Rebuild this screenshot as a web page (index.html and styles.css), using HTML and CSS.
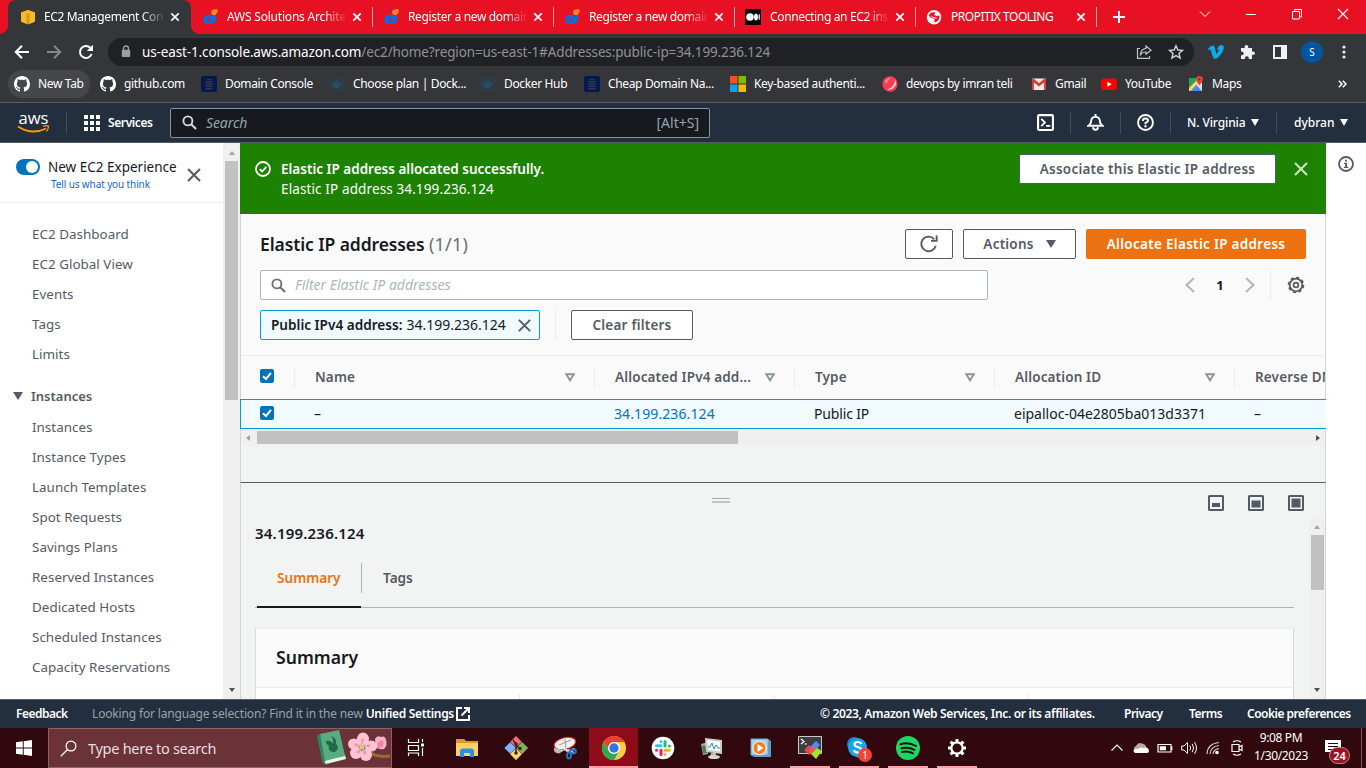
FILE: index.html
```html
<!DOCTYPE html>
<html lang="en">
<head>
<meta charset="utf-8">
<title>EC2 Management Console</title>
<link rel="stylesheet" href="styles.css">
</head>
<body>
<svg class="defs" width="0" height="0">
  <symbol id="x" viewBox="0 0 16 16"><path d="M2 2L14 14M14 2L2 14" fill="none" stroke="currentColor" stroke-width="2"/></symbol>
  <symbol id="tabx" viewBox="0 0 10 10"><path d="M1.3 1.3L8.7 8.7M8.7 1.3L1.3 8.7" fill="none" stroke="currentColor" stroke-width="1.700"/></symbol>
  <symbol id="do" viewBox="0 0 16 16"><path d="M7 5.500Q10 5.500 11.500 7.500L14 5V11A5.500 4.500 0 0 1 8 15H5.500A4.700 4.700 0 0 1 1 10.500Q1.500 5.800 7 5.500Z" fill="#0f6bdc"/><circle cx="7" cy="10.700" r="1.500" fill="#e81123"/><circle cx="12" cy="3.200" r="2.800" fill="#ff8a1e"/><circle cx="14" cy="2" r="1.900" fill="#ff8a1e"/></symbol>
  <symbol id="gh" viewBox="0 0 16 16"><path fill="#fff" d="M8 0C3.580 0 0 3.580 0 8c0 3.540 2.290 6.530 5.470 7.590.4.070.55-.17.55-.38 0-.19-.01-.82-.01-1.490-2.010.37-2.530-.49-2.690-.94-.09-.23-.48-.94-.82-1.130-.28-.15-.68-.52-.01-.53.63-.01 1.080.58 1.230.82.72 1.210 1.870.87 2.330.66.070-.52.28-.87.51-1.070-1.780-.2-3.640-.89-3.640-3.950 0-.87.31-1.590.82-2.150-.08-.2-.36-1.020.08-2.120 0 0 .67-.21 2.200.82.64-.18 1.320-.27 2-.27s1.360.09 2 .27c1.530-1.040 2.200-.82 2.200-.82.44 1.100.16 1.920.08 2.120.51.56.82 1.270.82 2.150 0 3.070-1.870 3.750-3.650 3.950.29.25.54.73.54 1.480 0 1.070-.01 1.930-.01 2.200 0 .21.15.46.55.38A8.010 8.010 0 0 0 16 8c0-4.420-3.580-8-8-8z"/></symbol>
  <symbol id="db" viewBox="0 0 16 16"><rect width="16" height="16" rx="2" fill="#03194f"/><path d="M5.500 3H10.500V4H5.500ZM4.500 5H11.500V6.600H4.500ZM4.500 7.300H11.500V8.800H4.500ZM4.500 9.500H11.500V11H4.500ZM4.500 11.700H11.500V13.500H4.500Z" fill="#35384a"/></symbol>
  <symbol id="dock" viewBox="0 0 16 16"><circle cx="8" cy="8" r="7.400" fill="#2f3a42" stroke="#2a4656" stroke-width=".8"/><path d="M3 8H10.500Q11 6.500 10.500 5.500Q12 6 12 7.300Q13 7 13.500 7.500Q13 8.700 11.700 8.700Q10.500 12 6.500 12Q3 12 3 8ZM4.500 6H9.500V7.500H4.500ZM7.500 4.300H9V6H7.500Z" fill="#24516a"/></symbol>
  <symbol id="search" viewBox="0 0 16 16"><circle cx="6.300" cy="6.300" r="4.800" fill="none" stroke="currentColor" stroke-width="2"/><path d="M9.800 9.800L15 15" stroke="currentColor" stroke-width="2.200"/></symbol>
  <symbol id="check" viewBox="0 0 14 14"><rect width="14" height="14" rx="2" fill="#0073bb"/><path d="M3 7.200L6 10L11 3.800" fill="none" stroke="#fff" stroke-width="2"/></symbol>
  <symbol id="sort" viewBox="0 0 10 9"><path d="M1.200 1.200H8.800L5 7.300Z" fill="none" stroke="#879596" stroke-width="1.900"/></symbol>
</svg>

<header class="tabs">
  <div class="tab active">
    <svg class="i16" viewBox="0 0 16 16"><path d="M1 3.500L8 1L15 3.500V12.500L8 15.500L1 12.500Z" fill="#d9971b"/><path d="M1 3.500L6.500 4.500V15L1 12.500ZM15 3.500L9.500 4.500V15L15 12.500ZM1 3.500L8 1L15 3.500L8 4.600Z" fill="#f6b92c"/></svg>
    <span class="t fade">EC2 Management Con</span><svg class="tx"><use href="#tabx"/></svg></div>
  <div class="tab"><svg class="i16"><use href="#do"/></svg><span class="t fade s2">AWS Solutions Archite</span><svg class="tx"><use href="#tabx"/></svg></div>
  <div class="tab"><svg class="i16"><use href="#do"/></svg><span class="t fade">Register a new domain</span><svg class="tx"><use href="#tabx"/></svg></div>
  <div class="tab"><svg class="i16"><use href="#do"/></svg><span class="t fade">Register a new domain</span><svg class="tx"><use href="#tabx"/></svg></div>
  <div class="tab"><svg class="i16" viewBox="0 0 16 16"><rect width="16" height="16" rx="1" fill="#000"/><circle cx="5" cy="8" r="3.800" fill="#fff"/><ellipse cx="11" cy="8" rx="1.900" ry="3.600" fill="#fff"/><ellipse cx="14.200" cy="8" rx=".7" ry="3.200" fill="#fff"/></svg><span class="t fade">Connecting an EC2 ins</span><svg class="tx"><use href="#tabx"/></svg></div>
  <div class="tab"><svg class="i16" viewBox="0 0 16 16"><circle cx="8" cy="8.300" r="7.200" fill="#f6f6f6"/><path d="M4 4.500Q7 2.500 9.500 3.800L8 6L11 7L13.500 6.500Q14 9 12 11.500L9.500 13.500L8 12L9 10L4.500 8.500L2.800 6.500Z" fill="#e81123"/><path d="M4.500 6L7 8L11.500 8.700L10 9.600L6 8.500Z" fill="#f6f6f6"/></svg><span class="t s3">PROPITIX TOOLING</span><svg class="tx"><use href="#tabx"/></svg></div>
  <svg class="plus" viewBox="0 0 12 12"><path d="M6 0V12M0 6H12" stroke="#fff" stroke-width="2"/></svg>
  <div class="winctl">
    <svg viewBox="0 0 12 12"><path d="M1 3.500L6 8.500L11 3.500" fill="none" stroke="#fff" stroke-width="1"/></svg>
    <svg viewBox="0 0 12 12"><path d="M1 6.500H11" stroke="#fff"/></svg>
    <svg viewBox="0 0 12 12"><path d="M1.500 3.500H8.500V11H1.500ZM3.500 3.500V1.500H10.500V9H8.500" fill="none" stroke="#fff"/></svg>
    <svg viewBox="0 0 12 12"><path d="M1 1L11 11M11 1L1 11" stroke="#fff" stroke-width="1.100"/></svg>
  </div>
</header>

<div class="toolbar">
  <svg class="nav n1" viewBox="0 0 16 16"><path d="M15 8H2M8 1.800L1.800 8L8 14.200" fill="none" stroke="#fff" stroke-width="2"/></svg>
  <svg class="nav n2" viewBox="0 0 16 16"><path d="M1 8H14M8 1.800L14.200 8L8 14.200" fill="none" stroke="#85868a" stroke-width="2"/></svg>
  <svg class="nav n3" viewBox="0 0 16 16"><path d="M13.600 10A6 6 0 1 1 12.300 3.800" fill="none" stroke="#fff" stroke-width="2"/><path d="M15 .8V7H8.800Z" fill="#fff"/></svg>
  <div class="url">
    <svg class="lock" viewBox="0 0 10 13"><path d="M2.500 5V3.500A2.500 2.500 0 0 1 7.500 3.500V5" fill="none" stroke="#9aa0a6" stroke-width="1.400"/><rect x=".8" y="4.800" width="8.400" height="7.200" rx="1" fill="#9aa0a6"/></svg>
    <span class="urltext"><b>us-east-1.console.aws.amazon.com</b>/ec2/home?region=us-east-1#Addresses:public-ip=34.199.236.124</span>
    <svg class="share" viewBox="0 0 16 16"><path d="M4 4.500H1.500V14.300H13.500V12" fill="none" stroke="#c2c3c5" stroke-width="1.200"/><path d="M10 2L15 6.200L10 10.300V8Q6.500 7.800 4.500 10.600Q5 5 10 4.400Z" fill="none" stroke="#c2c3c5" stroke-width="1.200"/></svg>
    <svg class="i16" viewBox="0 0 16 16"><path d="M8 1.800L9.900 6L14.500 6.400L11 9.500L12.100 14L8 11.600L3.900 14L5 9.500L1.500 6.400L6.100 6Z" fill="none" stroke="#d4d5d7" stroke-width="1.400"/></svg>
  </div>
  <div class="ext">
    <svg class="i16" viewBox="0 0 16 16"><path d="M0 4.800Q3.500 1.300 5.200 1.500Q7 1.800 7.400 6Q8 9.700 8.600 9.700Q9.300 9.700 10.700 6.800Q11 5.200 9 5.600Q10.300 1 13.500 1Q16 1.200 15.700 4.500Q15 8 11 12.500Q8.500 15.200 6.500 14.700Q4.800 14 4 10Q3 6 2.400 5.500Q2 5.400.8 6.200Z" fill="#0aabea"/></svg>
    <svg class="i16" viewBox="0 0 16 16"><path d="M1 4H4.700Q4.200 1 6.400 1Q8.600 1 8.200 4H12V7.500Q15 7 15 9.200Q15 11.300 12 10.900V15H8.800Q9 12.300 6.900 12.300Q4.800 12.300 5 15H1V11.200Q3.800 11.200 3.800 9.200Q3.800 7.300 1 7.400Z" fill="#f1f1f1"/></svg>
    <svg class="i16" viewBox="0 0 16 16"><path d="M1 1H15V15H1ZM3 3V13H9V3Z" fill="#f1f1f1" fill-rule="evenodd"/></svg>
    <span class="avatar">S</span>
    <svg class="dots" viewBox="0 0 4 14"><circle cx="2" cy="2" r="1.600" fill="#eee"/><circle cx="2" cy="7" r="1.600" fill="#eee"/><circle cx="2" cy="12" r="1.600" fill="#eee"/></svg>
  </div>
</div>

<nav class="marks">
  <a class="mk on"><svg class="i16"><use href="#gh"/></svg>New Tab</a>
  <a class="mk"><svg class="i16"><use href="#gh"/></svg>github.com</a>
  <a class="mk"><svg class="i16"><use href="#db"/></svg>Domain Console</a>
  <a class="mk"><svg class="i16"><use href="#dock"/></svg>Choose plan | Dock...</a>
  <a class="mk"><svg class="i16"><use href="#dock"/></svg>Docker Hub</a>
  <a class="mk"><svg class="i16"><use href="#db"/></svg>Cheap Domain Na...</a>
  <a class="mk"><svg class="i16" viewBox="0 0 16 16"><path d="M0 0H7.500V7.500H0Z" fill="#f4511e"/><path d="M8.500 0H16V7.500H8.500Z" fill="#7fba00"/><path d="M0 8.500H7.500V16H0Z" fill="#02a4ef"/><path d="M8.500 8.500H16V16H8.500Z" fill="#ffb901"/></svg>Key-based authenti...</a>
  <a class="mk"><svg class="i16" viewBox="0 0 16 16"><circle cx="8" cy="8" r="7.700" fill="#fb3b53"/><path d="M3 5Q5 1.500 9.500 1.500Q5.500 3.500 4.500 8Q3 7 3 5Z" fill="#fb8c9a"/><path d="M13.300 3.500Q16 9.500 10 13Q7.500 14 5.500 13.500Q12 11.500 13.300 3.500Z" fill="#fbd0d5"/></svg>devops by imran teli</a>
  <a class="mk"><svg class="i16" viewBox="0 0 16 16"><rect x="1" y="2.500" width="14" height="11.500" rx="1" fill="#eee"/><path d="M1 14V3.500L2.500 2.500L8 7L13.500 2.500L15 3.500V14H13V6.500L8 10.500L3 6.500V14Z" fill="#d93f35"/></svg>Gmail</a>
  <a class="mk"><svg class="i16" viewBox="0 0 16 16"><rect y="2.500" width="16" height="11.500" rx="3" fill="#f00"/><path d="M6.300 5.700L10.700 8.200L6.300 10.800Z" fill="#fff"/></svg>YouTube</a>
  <a class="mk"><svg class="i16" viewBox="0 0 16 16"><path d="M1 2H14V15H1Z" fill="#eef"/><path d="M1 2H9L8 7L1 14Z" fill="#2da05a"/><path d="M1 15L8 8L14 15Z" fill="#4c8bf5"/><path d="M1 12L9.500 3.500L11.500 5.500L2.500 15H1Z" fill="#fddc58"/><path d="M8 8L14 15V10L11 7Z" fill="#dde"/><path d="M11.500 0A3.300 3.300 0 0 1 14.800 3.300Q14.800 5.500 11.500 9.500Q8.200 5.500 8.200 3.300A3.300 3.300 0 0 1 11.500 0Z" fill="#e84335"/><circle cx="11.500" cy="3.300" r="1.100" fill="#7b231c"/></svg>Maps</a>
  <svg class="more" viewBox="0 0 9 8"><path d="M.8.8L4 4L.8 7.200M4.800.8L8 4L4.800 7.200" fill="none" stroke="#fff" stroke-width="1.500"/></svg>
</nav>

<div class="awsnav">
  <svg class="awslogo" viewBox="0 0 32 24"><text x="0.500" y="11.500" textLength="30" lengthAdjust="spacingAndGlyphs" class="awstext">aws</text><path d="M0 14.500Q14 23.500 28 16.500" fill="none" stroke="#f90" stroke-width="1.900"/><path d="M25 14.200Q30 13 30.500 14.500Q30.500 16.500 28.500 19.500" fill="none" stroke="#f90" stroke-width="1.300"/></svg>
  <i class="vd v1"></i>
  <svg class="grid" viewBox="0 0 16 16"><path d="M0 0H4V4H0ZM6 0H10V4H6ZM12 0H16V4H12ZM0 6H4V10H0ZM6 6H10V10H6ZM12 6H16V10H12ZM0 12H4V16H0ZM6 12H10V16H6ZM12 12H16V16H12Z" fill="#fff"/></svg>
  <b class="services">Services</b>
  <div class="awssearch"><svg class="si"><use href="#search"/></svg><i>Search</i><span>[Alt+S]</span></div>
  <div class="awsright">
    <div class="cell c1"><svg class="i17" viewBox="0 0 16 16"><rect x="1" y="1" width="14" height="14" rx="1" fill="none" stroke="#fff" stroke-width="2"/><path d="M4 4.500L7.500 8L4 11.500M8.500 11.200H12.500" fill="none" stroke="#fff" stroke-width="1.700"/></svg></div>
    <div class="cell c2"><svg class="i17" viewBox="0 0 16 16"><path d="M8 0V2.500M1.500 11Q3.800 9.500 4 6Q4.500 2.700 8 2.700Q11.500 2.700 12 6Q12.200 9.500 14.500 11ZM5.500 12.500Q6 14.800 8 14.800Q10 14.800 10.500 12.500" fill="none" stroke="#fff" stroke-width="1.800"/></svg></div>
    <div class="cell c2"><svg class="i17" viewBox="0 0 16 16"><circle cx="8" cy="8" r="7" fill="none" stroke="#fff" stroke-width="1.800"/><path d="M5.500 6.600Q5.500 4.300 8 4.300Q10.400 4.300 10.400 6.300Q10.400 7.500 8 8.300V9.600" fill="none" stroke="#fff" stroke-width="1.800"/><rect x="7" y="10.500" width="2" height="2" fill="#fff"/></svg></div>
    <div class="cell c3">N. Virginia<i class="dn"></i></div>
    <div class="cell c4">dybran<i class="dn"></i></div>
  </div>
</div>

<main class="page">
  <aside class="side">
    <div class="sidehead">
      <i class="toggle"></i>
      <div class="exp"><span>New EC2 Experience</span><small>Tell us what you think</small></div>
      <svg class="sx"><use href="#x"/></svg>
    </div>
    <ul class="links">
      <li>EC2 Dashboard</li><li>EC2 Global View</li><li>Events</li><li>Tags</li><li>Limits</li>
    </ul>
    <h3 class="group"><i class="dn"></i>Instances</h3>
    <ul class="links l2">
      <li>Instances</li><li>Instance Types</li><li>Launch Templates</li><li>Spot Requests</li><li>Savings Plans</li><li>Reserved Instances</li><li>Dedicated Hosts</li><li>Scheduled Instances</li><li>Capacity Reservations</li>
    </ul>
  </aside>
  <div class="vscroll"><i class="up"></i><i class="thumb"></i><i class="down"></i></div>

  <section class="content">
    <div class="flash">
      <svg class="i16" viewBox="0 0 16 16"><circle cx="8" cy="8" r="7" fill="none" stroke="#fff" stroke-width="1.800"/><path d="M4.700 8.200L7.200 10.500L11.300 5.800" fill="none" stroke="#fff" stroke-width="1.800"/></svg>
      <div class="flashtext"><b>Elastic IP address allocated successfully.</b><span>Elastic IP address 34.199.236.124</span></div>
      <button class="btn assoc">Associate this Elastic IP address</button>
      <svg class="fx"><use href="#x"/></svg>
    </div>
    <div class="head edge">
      <div class="row1">
        <h1>Elastic IP addresses <span>(1/1)</span></h1>
        <button class="btn refresh"><svg class="i18" viewBox="0 0 16 16"><path d="M14 9.500A6.500 6.500 0 1 1 12.700 3.800M14.800 .5V5.200H9.800" fill="none" stroke="#545b64" stroke-width="1.700"/></svg></button>
        <button class="btn actions">Actions<i class="dn"></i></button>
        <button class="btn primary">Allocate Elastic IP address</button>
      </div>
      <div class="row2">
        <div class="filter"><svg class="si"><use href="#search"/></svg><i>Filter Elastic IP addresses</i></div>
        <div class="pager">
          <svg class="pg" viewBox="0 0 10 16"><path d="M9 1L1.500 8L9 15" fill="none" stroke="#aab7b8" stroke-width="1.900"/></svg><b>1</b><svg class="pg" viewBox="0 0 10 16"><path d="M1 1L8.500 8L1 15" fill="none" stroke="#aab7b8" stroke-width="1.900"/></svg>
          <i class="pd"></i>
          <svg class="gear" viewBox="0 0 18 18"><circle cx="9" cy="9" r="6.300" fill="none" stroke="#545b64" stroke-width="1.800"/><circle cx="9" cy="9" r="7.500" fill="none" stroke="#545b64" stroke-width="1.600" stroke-dasharray="3.200 2.690"/><circle cx="9" cy="9" r="2.400" fill="none" stroke="#545b64" stroke-width="1.700"/></svg>
        </div>
      </div>
      <div class="row3">
        <div class="token"><b>Public IPv4 address:</b><span>34.199.236.124</span><svg><use href="#x"/></svg></div>
        <i class="pd"></i>
        <button class="btn clear">Clear filters</button>
      </div>
    </div>
    <div class="tr th edge">
      <div class="ck"><svg><use href="#check"/></svg></div>
      <div class="td w300"><span>Name</span><svg><use href="#sort"/></svg></div>
      <div class="td w200"><span>Allocated IPv4 add...</span><svg><use href="#sort"/></svg></div>
      <div class="td w200"><span>Type</span><svg><use href="#sort"/></svg></div>
      <div class="td w240"><span>Allocation ID</span><svg><use href="#sort"/></svg></div>
      <div class="td"><span>Reverse DNS</span></div>
    </div>
    <div class="tr row">
      <div class="ck"><svg><use href="#check"/></svg></div>
      <div class="td w300">–</div>
      <div class="td w200 link">34.199.236.124</div>
      <div class="td w200 pub">Public IP</div>
      <div class="td w240">eipalloc-04e2805ba013d3371</div>
      <div class="td">–</div>
    </div>
    <div class="hscroll edge"><i class="left"></i><i class="hthumb"></i><i class="right"></i></div>
    <div class="gap edge"></div>
    <div class="split edge">
      <div class="splitbar"><i class="handle"></i>
        <div class="modes">
          <svg viewBox="0 0 16 16"><rect x="1" y="1" width="14" height="14" rx=".5" fill="none" stroke="#545b64" stroke-width="2"/><path d="M4 8H12V12H4Z" fill="#545b64"/></svg>
          <svg viewBox="0 0 16 16"><rect x="1" y="1" width="14" height="14" rx=".5" fill="none" stroke="#545b64" stroke-width="2"/><path d="M3.500 5.500H12.500V12.500H3.500Z" fill="#545b64"/></svg>
          <svg viewBox="0 0 16 16"><rect x="1" y="1" width="14" height="14" rx=".5" fill="none" stroke="#545b64" stroke-width="2"/><path d="M3.500 3.500H12.500V12.500H3.500Z" fill="#545b64"/></svg>
        </div>
      </div>
      <div class="splitbody">
        <div class="detail">
          <h2>34.199.236.124</h2>
          <div class="dtabs"><b class="cur">Summary</b><b>Tags</b></div>
          <div class="card"><h2>Summary</h2><div class="cols"><i></i><i></i><i></i></div></div>
        </div>
        <div class="vscroll inner"><i class="up"></i><i class="thumb"></i><i class="down"></i></div>
      </div>
    </div>
  </section>
  <aside class="info"><svg class="i16" viewBox="0 0 16 16"><circle cx="8" cy="8" r="7" fill="none" stroke="#545b64" stroke-width="1.800"/><path d="M7 3.700H9V5.500H7ZM6 6.700H9V10.700H10.300V12H5.800V10.700H7.200V8H6Z" fill="#545b64"/></svg></aside>
</main>

<footer class="foot">
  <b class="f1">Feedback</b>
  <span class="f2">Looking for language selection? Find it in the new <b>Unified Settings</b></span>
  <svg class="extl" viewBox="0 0 14 14"><path d="M6 1H1V13H13V8M8 1H13V6M13 1L5.500 8.500" fill="none" stroke="#fff" stroke-width="2"/></svg>
  <b class="f3">© 2023, Amazon Web Services, Inc. or its affiliates.</b>
  <b class="f4">Privacy</b><b class="f5">Terms</b><b class="f6">Cookie preferences</b>
</footer>

<div class="taskbar">
  <div class="start"><svg class="i16" viewBox="0 0 16 16"><path d="M0 2.300L6.800 1.300V7.600H0ZM7.700 1.200L16 0V7.600H7.700ZM0 8.400H6.800V14.700L0 13.700ZM7.700 8.400H16V16L7.700 14.800Z" fill="#fff"/></svg></div>
  <div class="tsearch">
    <svg class="mag" viewBox="0 0 17 17"><circle cx="11" cy="6" r="4.900" fill="none" stroke="#fff" stroke-width="1.200"/><path d="M7.500 9.500L.8 16.200" stroke="#fff" stroke-width="1.300"/></svg>
    <span>Type here to search</span>
    <svg class="art" viewBox="0 0 76 36">
      <path d="M2 6L24 1L31 29L9 35Z" fill="#277d5c"/><path d="M9 31L30 25L31 29L11 34Z" fill="#eef3ee"/><path d="M5 4L24 0L30 26L9 31Z" fill="#58ad80"/><path d="M2 6L5 4L10 31L8 35Z" fill="#2c8562"/><path d="M14 16Q10 13 11 11Q16 10 18 14Q19 9 16 6Q22 8 21 14A4.500 4.500 0 1 1 14 16Z" fill="#20694d"/>
      <path d="M54 21Q60 28 75 26" stroke="#9a6b31" stroke-width="3" fill="none"/>
      <path d="M60 9Q62 5 66 7Q70 5 71 10Q73 15 69 19Q63 20 61 16Z" fill="#ffb0c6"/><path d="M62 14Q65 8 69 12Q68 18 63 18Z" fill="#f284a6"/>
      <g fill="#ffc3d3"><ellipse cx="48" cy="9" rx="6" ry="6.500"/><ellipse cx="56" cy="16" rx="6.500" ry="5.500"/><ellipse cx="51" cy="25" rx="6" ry="6"/><ellipse cx="41" cy="23" rx="6" ry="6"/><ellipse cx="39" cy="14" rx="6" ry="5.500"/></g>
      <g fill="#f694b3"><path d="M47 17L46 9L49 9ZM47 17L55 14L55 17ZM47 17L52 23L49 25ZM47 17L44 24L41 22ZM47 17L39 16L40 13Z"/></g><circle cx="47" cy="17" r="2.600" fill="#c3d47c"/>
    </svg>
  </div>
  <div class="app first"><svg class="i24" viewBox="0 0 24 24"><path d="M4.500 3V6.500H14.500V3M4.500 20V17H14.500V20M4.500 9.500H14.500V14.500H4.500ZM18.500 3V6M18.500 12V20" fill="none" stroke="#fff" stroke-width="1.200"/><rect x="17" y="7.500" width="3" height="3" fill="#fff"/></svg></div>
  <div class="app"><svg class="i24" viewBox="0 0 24 24"><path d="M1 3H9L11 5H23V8H1Z" fill="#dc9a20"/><path d="M1 7H23V20H1Z" fill="#fdd162"/><path d="M5 21V15Q5 12.500 8 12.500H16Q19 12.500 19 15V21H15V17H9V21Z" fill="#2f8edd"/></svg></div>
  <div class="app"><svg class="i24" viewBox="0 0 24 24"><g transform="rotate(45 12 12)"><rect x="3.500" y="3.500" width="8" height="8" fill="#f27178"/><rect x="12.500" y="3.500" width="8" height="8" fill="#f27178"/><rect x="12.500" y="12.500" width="8" height="8" fill="#7bb658"/></g><path d="M6.300 6.300L12 12L6.300 17.700L.3 12Z" fill="#80b3ff"/><path d="M12 12.500L17.700 18L12 24L6.300 18Z" fill="#ffd76c"/><path d="M17.700 6.300L23.700 12L17.700 17.700L12 12Z" fill="#7bb658"/><path d="M9 4L12 8V18M12 9L16 13" stroke="#43211f" stroke-width="1.500" fill="none"/><g fill="#43211f"><circle cx="12" cy="8" r="1.800"/><circle cx="12" cy="17" r="1.800"/><circle cx="16" cy="12.500" r="1.800"/></g></svg></div>
  <div class="app"><svg class="i24" viewBox="0 0 24 24"><ellipse cx="12" cy="7.500" rx="11" ry="5.800" fill="#f2eeee" stroke="#d92b2b" transform="rotate(-14 12 8)"/><path d="M1 12Q0 17 6 17.500L12 14Z" fill="#b9bdc0"/><path d="M6 9L18 4M12 3L13 13" stroke="#999"/><path d="M11 13L21 17M13 15L22 13" stroke="#ddd" stroke-width="2"/><g fill="none" stroke="#2474b8" stroke-width="2"><ellipse cx="20" cy="15.500" rx="3" ry="2"/><ellipse cx="16" cy="19.500" rx="2" ry="3"/></g></svg></div>
  <div class="app chrome"><svg class="i24" viewBox="0 0 24 24"><circle cx="12" cy="12" r="12" fill="#fc4"/><path d="M1.600 6A12 12 0 0 1 22.400 6H12Q7 6 6.500 14Z" fill="#e94235"/><path d="M1.600 6A12 12 0 0 0 12 24L17.200 15Q11 20 6.800 15Z" fill="#2da94f"/><circle cx="12" cy="12" r="6" fill="#fff"/><circle cx="12" cy="12" r="4.700" fill="#3574e3"/></svg></div>
  <div class="app"><svg class="i24" viewBox="0 0 24 24"><circle cx="12" cy="12" r="11.300" fill="#fff"/><g stroke-width="3" stroke-linecap="round"><path d="M10 5.500V5.600M5.500 9.800H10" stroke="#36c5f0"/><path d="M14 5.500V10M18.500 10V10.100" stroke="#2eb67d"/><path d="M14 14.200H18.500M14 18.500V18.600" stroke="#ecb22e"/><path d="M10 14.200V18.500M5.500 14.200V14.300" stroke="#e01e5a"/></g></svg></div>
  <div class="app"><svg class="i24" viewBox="0 0 24 24"><path d="M1 8L8 6V18L3 19Z" fill="#9da3a0"/><path d="M2 10H7V17H3Z" fill="#507858"/><path d="M5 2L22 4V18L6 16Z" fill="#c9ccca"/><path d="M7 4L20 5.500V15.500L8 14Z" fill="#f5fafb"/><path d="M8 11H10L12 7L14 13L16 9L18 12H20" fill="none" stroke="#3e8aae" stroke-width="1"/><path d="M11 17H16V21H10Z" fill="#b5b9b6"/><ellipse cx="14" cy="21" rx="6" ry="2" fill="#d4d8d5"/></svg></div>
  <div class="app"><svg class="i24" viewBox="0 0 24 24"><path d="M2 3H19L22 5V21H5L2 19Z" fill="#5f9cc0"/><path d="M2 3H19V19H2Z" fill="#a9d4ea" stroke="#6da6c4"/><circle cx="10.500" cy="12" r="6.600" fill="#f47b20" stroke="#fff"/><path d="M8.500 8L14.500 12L8.500 16Z" fill="#fff"/></svg></div>
  <div class="app run"><svg class="i24" viewBox="0 0 24 24"><path d="M.5.500H23.500V17.500H.5Z" fill="#3a3e3f" stroke="#c9c9c9"/><path d="M3 3L6 5.500L3 8M6.500 8H9" stroke="#fff" stroke-width="1.200" fill="none"/><path d="M6 14L11 9L16 14L11 19Z" fill="#e84747"/><path d="M12 11L18 5L22 9L16 16Z" fill="#4e8df5"/><path d="M13 18L19 12L24 15L18 23Z" fill="#a6e22e"/><path d="M11 15L16 10L18 13L13 18Z" fill="#f5574e"/></svg></div>
  <div class="app run"><svg class="i24" viewBox="0 0 24 24"><circle cx="7" cy="8" r="7" fill="#0b8ad0"/><circle cx="13" cy="15" r="7" fill="#0b8ad0"/><circle cx="10.500" cy="11.500" r="9.500" fill="#18a8ea"/><path d="M14.500 8Q13.500 5.800 10.500 6Q7.500 6.300 7.500 8.300Q7.600 10.500 11 11.200Q14.700 12 14.300 14.400Q13.800 16.700 10.800 16.700Q7.700 16.600 6.900 14.200" fill="none" stroke="#fff" stroke-width="2.200"/></svg><span class="badge1">1</span></div>
  <div class="app run"><svg class="i24" viewBox="0 0 24 24"><circle cx="12" cy="12" r="12" fill="#1ed760"/><path d="M4.500 8.200Q12.500 5.800 20 10M5.500 12.300Q12 10.500 18.500 13.800M6 16Q12 14.500 17 17.300" fill="none" stroke="#191414" stroke-width="2" stroke-linecap="round"/></svg></div>
  <div class="app run"><svg class="i24" viewBox="0 0 24 24"><circle cx="12" cy="12" r="5.700" fill="none" stroke="#fff" stroke-width="2.300"/><path d="M12 3V6.200M12 17.800V21M3 12H6.200M17.800 12H21M5.600 5.600L7.900 7.900M16.100 16.100L18.400 18.400M5.600 18.400L7.900 16.100M16.100 7.900L18.400 5.600" stroke="#fff" stroke-width="3"/></svg></div>
  <div class="tray">
    <svg viewBox="0 0 16 16"><path d="M2.500 10.500L8 5L13.500 10.500" fill="none" stroke="#fff" stroke-width="1.200"/></svg>
    <svg viewBox="0 0 16 16"><path d="M3 12.500A3.500 3.500 0 0 1 3 6Q5 2 9 3.500Q13 4 13.500 8Z" fill="#b9a8aa"/><path d="M2 13Q-1 11 2 9Q4 8.500 5 9Q7 6.500 10 8Q15 6.500 16 10.500Q16 13 14 13Z" fill="#fff"/></svg>
    <svg viewBox="0 0 16 16"><path d="M1 4.500H14V12H1ZM14.800 6.500V10" fill="none" stroke="#fff" stroke-width="1.200"/><path d="M2.800 6.200H9V10.300H2.800Z" fill="#fff"/></svg>
    <svg viewBox="0 0 16 16"><path d="M.7 6H3L6.500 2.500V13.500L3 10H.7ZM8.800 5.500Q10.500 8 8.800 10.500M11.200 3.800Q14 8 11.200 12.200M13.500 2.200Q17.500 8 13.500 13.800" fill="none" stroke="#fff"/></svg>
    <svg viewBox="0 0 16 16"><path d="M2 14Q2.500 3.500 14 2.500M5 14Q5.500 6.500 14 5.500M8 14Q8.500 9.500 14 8.500" fill="none" stroke="#d7c9cb" stroke-width="1.200"/><circle cx="12" cy="12.500" r="1.800" fill="#fff"/></svg>
    <svg viewBox="0 0 16 16"><path d="M3 4.500H10V11.500H3ZM10 7L13 5.500V10.500L10 9M4 2Q8 -.5 12 2M4 14Q8 16.500 12 14" fill="none" stroke="#fff" stroke-width="1.200"/></svg>
  </div>
  <div class="clock"><span>9:08 PM</span><span>1/30/2023</span></div>
  <div class="notif"><svg class="i16" viewBox="0 0 16 16"><path d="M0 0H16V12H9L5 16V12H0Z" fill="#fff"/><path d="M3 3.500H13M3 6.500H13M3 9.500H9" stroke="#2e070c" stroke-width="1.200"/></svg><span class="badge24">24</span></div>
  <i class="peek"></i>
</div>
</body>
</html>
```
FILE: styles.css
```css
* { box-sizing: border-box; }
body { margin: 0; width: 1366px; height: 768px; overflow: hidden; display: flex; flex-direction: column; font: 13.5px/20px "Noto Sans", "Open Sans", sans-serif; color: #16191f; background: #fff; }
svg { display: block; flex: none; }
.defs { position: absolute; }
h1, h2, h3, ul { margin: 0; padding: 0; list-style: none; }
.i16 { width: 16px; height: 16px; }
.i17 { width: 17px; height: 17px; }
.i18 { width: 18px; height: 18px; }
.i24 { width: 24px; height: 24px; }
.dn { display: inline-block; border: 4.5px solid transparent; border-top: 7px solid currentColor; border-bottom: 0; }

/* browser tabs */
.tabs { height: 34px; flex: none; background: #e81123; display: flex; align-items: center; padding-left: 10px; font-size: 12px; color: #fff; }
.tab { width: 181px; height: 34px; flex: none; display: flex; align-items: center; padding-left: 11px; position: relative; }
.tab .t { width: 118px; margin-left: 9px; overflow: hidden; white-space: nowrap; letter-spacing: -.35px; }
.tab .s2 { letter-spacing: -.2px; }
.tab .s3 { letter-spacing: -.47px; }
.fade { -webkit-mask-image: linear-gradient(90deg, #000 82%, transparent 102%); mask-image: linear-gradient(90deg, #000 82%, transparent 102%); }
.tx { width: 10px; height: 10px; margin-left: 7px; }
.tab:not(.active)::after { content: ""; width: 1px; height: 20px; margin-left: auto; margin-right: -1px; background: #f7a5ab; }
.tab.active { width: 183px; margin-left: -2px; margin-right: 0; padding-left: 12px; background: #35363a; border-radius: 8px 8px 0 0; }
.tab.active .t { margin-left: 8px; width: 119px; }
.tab.active::before, .tab.active::after { content: ""; position: absolute; bottom: 0; width: 8px; height: 8px; }
.tab.active::before { left: -8px; background: radial-gradient(circle at 0 0, transparent 7.500px, #35363a 8px); }
.tab.active::after { right: -8px; background: radial-gradient(circle at 100% 0, transparent 7.500px, #35363a 8px); }
.plus { width: 12px; height: 12px; margin-left: 17px; }
.winctl { display: flex; gap: 34px; margin: -6px 17px 0 auto; }
.winctl svg { width: 12px; height: 12px; }

/* address bar */
.toolbar { height: 36px; flex: none; background: #35363a; display: flex; align-items: center; }
.nav { width: 16px; height: 16px; }
.n1 { margin-left: 14px; }
.n2 { margin-left: 16px; }
.n3 { margin-left: 16px; }
.url { margin-left: 14px; width: 1086px; height: 28px; border-radius: 14px; background: #202124; display: flex; align-items: center; padding: 0 10px 0 13px; }
.lock { width: 10px; height: 13px; margin-bottom: 2px; }
.urltext { margin-left: 11px; font-size: 13.5px; color: #909296; letter-spacing: -.13px; white-space: nowrap; flex: 1; }
.urltext b { font-weight: 400; color: #fff; }
.share { width: 16px; height: 16px; margin-right: 16px; }
.ext { display: flex; align-items: center; gap: 16px; margin-left: 14px; }
.avatar { width: 22px; height: 22px; border-radius: 50%; background: #00579f; color: #fff; font-size: 10px; text-align: center; line-height: 22px; margin-left: -3px; }
.dots { width: 4px; height: 14px; margin-left: 3px; }

/* bookmarks */
.marks { height: 33px; flex: none; background: #35363a; border-bottom: 1px solid #5b5c5f; display: grid; grid-template-columns: 86px 101px 128px 151px 104px 146px 152px 149px 70px 87px 156px auto; padding: 0 0 4px 8px; align-items: center; justify-content: start; color: #fff; font-size: 12px; letter-spacing: -.35px; }
.mk { height: 28px; display: flex; align-items: center; gap: 8px; padding-left: 6px; white-space: nowrap; }
.on { width: 82px; border-radius: 14px; background: #46474b; }
.more { width: 9px; height: 8px; }

/* console navigation */
.awsnav { height: 40px; flex: none; background: #232f3e; border-bottom: 1px solid #545b64; display: flex; align-items: center; color: #fff; font-size: 12px; }
.awslogo { width: 32px; height: 24px; margin-left: 18px; margin-top: 2px; overflow: visible; }
.awstext { font: 500 16px "Open Sans", sans-serif; fill: #fff; }
.vd { width: 1px; height: 22px; background: #414d5c; }
.v1 { margin-left: 16px; }
.grid { width: 16px; height: 16px; margin-left: 17px; }
.services { margin-left: 8px; width: 62px; font-weight: 600; letter-spacing: -.4px; }
.awssearch { width: 540px; height: 30px; border: 1px solid #879596; border-radius: 2px; background: #16191f; display: flex; align-items: center; padding: 0 10px 0 11px; color: #95a5a6; font-size: 14px; }
.si { width: 15px; height: 15px; }
.awssearch .si { color: #d5dbdb; }
.awssearch i { margin-left: 9px; flex: 1; letter-spacing: -.1px; }
.awsright { margin-left: auto; display: flex; align-items: center; }
.cell { height: 22px; display: flex; align-items: center; border-left: 1px solid #414d5c; white-space: nowrap; }
.c1 { border: 0; width: 33px; }
.c2 { width: 50px; padding-left: 16px; }
.c3 { width: 106px; padding-left: 16px; font-weight: 500; letter-spacing: -.1px; }
.c4 { width: 90px; padding-left: 17px; font-weight: 500; }
.cell .dn { margin-left: 6px; }

/* page frame */
.page { height: 556px; flex: none; display: flex; overflow: hidden; }
.side { width: 223px; color: #545b64; }
.sidehead { height: 60px; border-bottom: 1px solid #eaeded; display: flex; padding: 1px 0 0 16px; }
.toggle { width: 24px; height: 16px; border-radius: 8px; background: #0073bb; margin-top: 15px; padding: 2px 2px 2px 10px; }
.toggle::after { content: ""; display: block; width: 12px; height: 12px; border-radius: 6px; background: #fff; }
.exp { margin-left: 8px; width: 130px; padding-top: 13px; display: flex; flex-direction: column; color: #16191f; white-space: nowrap; }
.exp small { font-size: 10px; line-height: 14px; color: #1a66c4; margin-left: 3px; letter-spacing: -.12px; }
.sx { width: 16px; height: 16px; margin: 23px 0 0 8px; color: #545b64; }
.links { padding: 16px 0 0 32px; font-size: 13.4px; }
.links li { height: 30px; line-height: 30px; white-space: nowrap; letter-spacing: .03px; }
.group { font-size: 13px; font-weight: 600; line-height: 30px; height: 30px; margin-top: 12px; padding-left: 13px; display: flex; align-items: center; gap: 8px; }
.group .dn { border-width: 8px 5.500px 0; }
.l2 { padding-top: 0; margin-top: 1px; }
.vscroll { width: 17px; background: #f0f0f0; display: flex; flex-direction: column; align-items: center; }
.vscroll .up { border: 3.500px solid transparent; border-top: 0; border-bottom: 4px solid #a3a3a3; margin: 8px 0 6px; }
.vscroll .thumb { width: 13px; height: 239px; background: #c1c1c1; }
.vscroll .down { border: 3.500px solid transparent; border-bottom: 0; border-top: 4px solid #505050; margin: auto 0 7px; }
.info { width: 40px; padding: 13px 0 0 12px; }

/* flash */
.content { width: 1086px; background: #f2f3f3; display: flex; flex-direction: column; overflow: hidden; }
.edge { border: 0 solid #d0d5d5; border-left-width: 1px; border-right-width: 1px; }
.flash { height: 71px; flex: none; background: #1d8102; color: #fff; display: flex; padding: 11px 17px 0 15px; }
.flash .i16 { margin-top: 7px; }
.flashtext { flex: 1; margin: 5px 0 0 10px; display: flex; flex-direction: column; letter-spacing: .12px; }
.flashtext b { font-weight: 600; letter-spacing: 0; }
.btn { font: 600 13.5px/20px "Noto Sans", sans-serif; letter-spacing: .22px; height: 30px; border: 1px solid #545b64; border-radius: 2px; background: #fff; color: #545b64; padding: 0; flex: none; white-space: nowrap; display: flex; align-items: center; justify-content: center; }
.assoc { width: 257px; }
.fx { width: 16px; height: 16px; margin: 7px 0 0 17px; color: #cfe6c9; }

/* list header */
.head { height: 141px; flex: none; background: #fafafa; padding: 15px 19px 0; }
.row1, .row2, .row3 { display: flex; align-items: center; height: 30px; }
.row1 { gap: 10px; }
h1 { flex: 1; font-size: 17.5px; font-weight: 600; letter-spacing: -.1px; }
h1 span { font-weight: 400; font-size: 18px; letter-spacing: .2px; color: #687078; }
.refresh { width: 48px; }
.actions { width: 113px; }
.actions .dn { margin-left: 12px; border-width: 8px 5.500px 0; }
.primary { width: 220px; background: #ec7211; border-color: #ec7211; color: #fff; letter-spacing: .3px; }
.row2 { margin-top: 11px; justify-content: space-between; }
.filter { width: 728px; height: 30px; border: 1px solid #aab7b8; border-radius: 2px; background: #fff; display: flex; align-items: center; padding-left: 10px; gap: 9px; color: #aab7b8; font-size: 14px; }
.filter .si { color: #687078; }
.pager { display: flex; align-items: center; height: 30px; }
.pg { width: 10px; height: 16px; }
.pager b { font-size: 13px; width: 50px; text-align: center; }
.pd { width: 1px; height: 30px; background: #eaeded; margin: 0 15px; }
.pager .pd { margin-right: 16px; }
.gear { width: 18px; height: 18px; margin-right: 1px; }
.row3 { margin-top: 10px; }
.token { width: 280px; height: 30px; border: 1px solid #00a1c9; border-radius: 2px; background: #f1faff; display: flex; align-items: center; padding-left: 10px; font-size: 14px; }
.token b { font-weight: 600; font-size: 13.6px; }
.token span { margin-left: 4px; }
.token svg { width: 15px; height: 15px; margin-left: auto; margin-right: 7px; color: #545b64; }
.clear { width: 122px; }

/* table */
.tr { display: flex; align-items: center; flex: none; overflow: hidden; }
.th { height: 44px; border-top: 1px solid #eaeded; background: #fafafa; color: #545b64; font-weight: 600; font-size: 13.5px; letter-spacing: .15px; }
.ck { width: 53px; padding-left: 19px; flex: none; }
.ck svg { width: 14px; height: 14px; margin-bottom: 2px; }
.th .ck svg { margin-bottom: 4px; }
.td { flex: none; height: 20px; line-height: 20px; padding-left: 20px; display: flex; align-items: center; white-space: nowrap; }
.th .td { border-left: 1px solid #eaeded; }
.th .td span { margin-top: -2px; }
.td svg { width: 10px; height: 9px; margin-left: auto; margin-right: 19px; }
.w300 { width: 300px; } .w200 { width: 200px; } .w240 { width: 240px; }
.row { height: 30px; border: 1px solid #00a1c9; border-right: 0; background: #f1faff; font-size: 14px; }
.row .link { color: #0073bb; letter-spacing: .1px; }
.row .pub { letter-spacing: -.15px; }
.hscroll { height: 17px; flex: none; background: #f0f0f0; display: flex; align-items: center; }
.hscroll .left { border: 3.500px solid transparent; border-left: 0; border-right: 4px solid #a3a3a3; margin: 0 7px 0 5px; }
.hthumb { width: 481px; height: 13px; background: #c1c1c1; }
.hscroll .right { border: 3.500px solid transparent; border-right: 0; border-left: 4px solid #505050; margin: 0 5px 0 auto; }
.gap { height: 36px; flex: none; }

/* split panel */
.split { flex: 1; min-height: 0; border-top: 1px solid #545b64; display: flex; flex-direction: column; }
.splitbar { height: 35px; flex: none; display: flex; padding: 12px 21px 0 471px; justify-content: space-between; }
.handle { width: 18px; height: 5px; margin-top: 3px; border-top: 1px solid #aaa; border-bottom: 2px solid #c4c6c6; }
.modes { display: flex; gap: 24px; }
.modes svg { width: 16px; height: 16px; }
.splitbody { flex: 1; min-height: 0; display: flex; overflow: hidden; }
.detail { width: 1053px; margin-right: 15px; padding-left: 14px; flex: none; overflow: hidden; }
.detail > h2 { font-size: 15px; font-weight: 600; line-height: 20px; margin-top: 5px; letter-spacing: .2px; }
.dtabs { height: 65px; border-bottom: 1px solid #aab7b8; display: flex; color: #545b64; font-size: 13.6px; }
.dtabs b { font-weight: 600; padding: 25px 0 0 22px; height: 65px; }
.dtabs .cur { width: 104px; margin-left: 2px; padding-left: 20px; color: #ec7211; border-bottom: 2px solid #16191f; position: relative; }
.dtabs .cur::after { content: ""; position: absolute; right: -1px; top: 20px; width: 1px; height: 30px; background: #aab7b8; }
.card { margin-top: 20px; height: 100px; border: 1px solid #d5dbdb; border-top-color: #eaeded; background: #fff; }
.card h2 { height: 59px; line-height: 57px; padding-left: 20px; font-size: 17.6px; font-weight: 600; background: #fafafa; border-bottom: 1px solid #eaeded; }
.cols { display: flex; padding: 6px 0 0 9px; height: 30px; }
.cols i { width: 255px; border-right: 1px solid #eaeded; }
.cols i:last-child { width: 254px; }
.inner { width: 16px; }
.inner .up { margin-top: 7px; }
.inner .thumb { height: 55px; }

/* footer */
.foot { height: 29px; flex: none; background: #232f3e; border-top: 1px solid #545b64; color: #fff; display: flex; align-items: center; font-size: 12px; white-space: nowrap; letter-spacing: -.16px; }
.foot b { font-weight: 600; letter-spacing: -.5px; }
.foot .f1 { margin-left: 16px; width: 76px; }
.f2 { color: #95a5a6; width: 362px; }
.foot .f2 b { color: #fff; letter-spacing: -.32px; }
.extl { width: 14px; height: 14px; margin-left: 2px; }
.foot .f3 { margin-left: 350px; width: 304px; letter-spacing: -.34px; }
.f4 { width: 65px; } .f5 { width: 58px; }

/* taskbar */
.taskbar { height: 40px; flex: none; background: #30080d; display: flex; color: #fff; }
.start { width: 48px; padding: 12px 16px; }
.tsearch { width: 344px; height: 40px; background: #6b3237; border: 1px solid #8f6265; display: flex; align-items: center; padding-left: 11px; font-size: 14.500px; color: #eadfe0; }
.mag { width: 17px; height: 17px; }
.tsearch span { margin-left: 11px; flex: 1; white-space: nowrap; letter-spacing: -.28px; }
.art { width: 76px; height: 36px; }
.app { width: 49px; height: 40px; display: flex; align-items: center; justify-content: center; position: relative; flex: none; }
.first { width: 50px; padding-right: 2px; }
.chrome { background: #8e0c19; border-bottom: 2px solid #fba1a8; padding-top: 2px; }
.run { background: linear-gradient(#fba1a8, #fba1a8) 50% 100% / 40px 2px no-repeat; }
.badge1 { position: absolute; left: 24px; top: 20px; width: 14px; height: 14px; border-radius: 7px; background: #f04438; font-size: 10px; line-height: 14px; text-align: center; }
.tray { margin-left: 128px; display: flex; gap: 8px; align-items: center; }
.tray svg { width: 16px; height: 16px; }
.clock { width: 72px; display: flex; flex-direction: column; text-align: center; font-size: 12px; line-height: 18px; padding-top: 1px; letter-spacing: -.35px; }
.notif { width: 44px; padding: 12px 0 0 8px; position: relative; }
.badge24 { position: absolute; left: 12px; top: 19px; width: 21px; height: 17px; border-radius: 9px; background: #9b1422; border: 1px solid #c98188; font: 600 11px/15px "Noto Sans", sans-serif; text-align: center; }
.peek { width: 1px; height: 40px; background: #75585b; }
```
